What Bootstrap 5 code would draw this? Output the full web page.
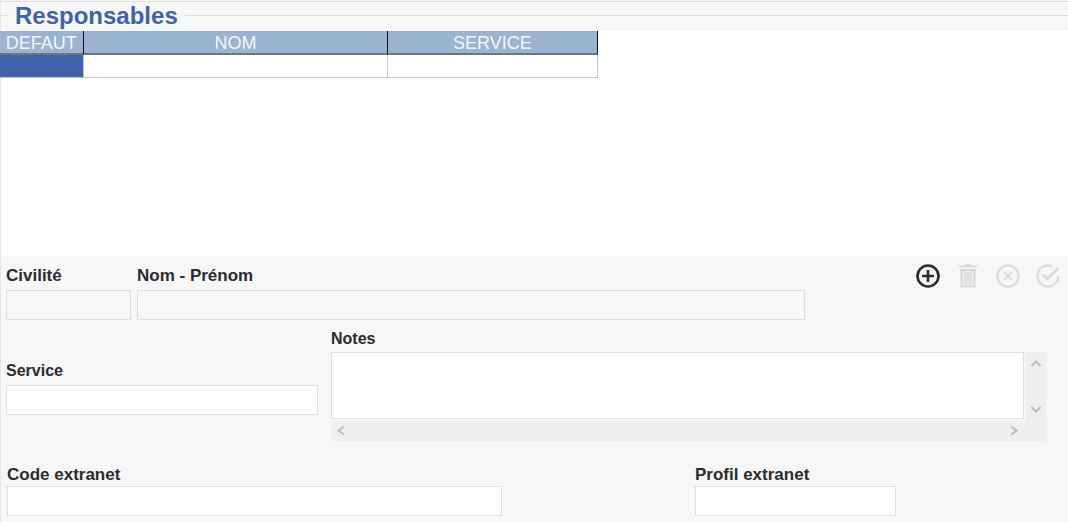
<!DOCTYPE html>
<html lang="fr">
<head>
<meta charset="utf-8">
<meta name="viewport" content="width=device-width, initial-scale=1">
<title>Responsables</title>
<link rel="stylesheet" href="https://cdn.jsdelivr.net/npm/bootstrap@5.3.0/dist/css/bootstrap.min.css">
<style>
  body { background: #f7f7f7; color: #2b2b30; font-family: "Liberation Sans", Arial, sans-serif; font-size: 17px; }
  .panel { border-left: 1px solid #e6e6e6; min-height: 100vh; }
  .panel-head { height: 31px; padding-top: 1px; }
  .rule { height: 1px; background: #dedede; }
  .title { color: #3f63a8; font-size: 24px; line-height: 28px; padding: 0 7px 0 6px; }
  .title-row { height: 27px; }

  .list-area { background: #fff; height: 225px; }
  .people { width: 56%; table-layout: fixed; border-collapse: separate; border-spacing: 0; margin-left: -1px; }
  .people th { height: 24px; padding: 3px 0 0; background: #99b3d1; color: #f4f7fa; font-size: 18px; font-weight: 400; line-height: 19px; text-align: center; border-right: 1px solid #111; border-bottom: 2px solid #6d7680; }
  .people td { height: 23px; padding: 0; background: #fff; border-right: 1px solid #c6c6c6; border-bottom: 1px solid #c6c6c6; }
  .people td.picked { background: #3f63a8; }
  .c-default { width: 14%; }
  .c-name { width: 51%; }

  .line { display: grid; }
  .line-id { grid-template-columns: 125fr 668fr 251fr; column-gap: 6px; padding: 8px 6px 0 5px; }
  .line-notes { grid-template-columns: 312fr 715fr; column-gap: 13px; padding: 7px 22px 0 5px; }
  .line-extranet { grid-template-columns: 495fr 193fr 201fr 167fr; padding: 22px 5px 6px 6px; }
  .service { padding-top: 32px; }
  .form-label { display: block; margin: 0 0 3px; padding-top: 1px; line-height: 22px; font-weight: 700; }
  .line-notes .form-label { font-size: 16px; }
  .line-notes .notes-label { margin-bottom: 2px; }
  .line-extranet .form-label { margin-bottom: 0; }
  .form-control, .form-control:disabled { height: 30px; padding: 2px 6px; border: 1px solid #dedede; border-radius: 0; background: #fff; font-size: 16px; }
  .form-control:disabled { background: #f7f7f7; }

  .tools { padding-right: 2px; }
  .tool { width: 24px; height: 24px; padding: 0; border: 0; background: none; color: #2b2b30; line-height: 0; }
  .tool:disabled { color: #dadada; }
  .tool svg { width: 24px; height: 24px; fill: none; stroke: currentColor; stroke-width: 2; }

  .notes-box { display: grid; grid-template: 67px 20px / 1fr 20px; row-gap: 2px; }
  .notes-box textarea.form-control { height: 67px; min-height: 0; resize: none; overflow: hidden; }
  .bar-y, .bar-x { background: #efefef; }
  .bar-y { grid-row: 1 / 3; grid-column: 2; padding: 2px 0 22px; }
  .with-bar { padding-right: 2px; }
  .bar-x { padding-right: 2px; }
  .arrow { width: 20px; height: 20px; padding: 0; border: 0; background: none; color: #bdbdbd; line-height: 0; }
  .arrow svg { width: 12px; height: 12px; fill: none; stroke: currentColor; stroke-width: 2; }
</style>
</head>
<body>
<main class="panel">
  <header class="panel-head">
    <div class="rule"></div>
    <div class="title-row d-flex align-items-center">
      <div class="rule" style="width: 8px"></div>
      <h1 class="title fw-bold m-0">Responsables</h1>
      <div class="rule flex-grow-1"></div>
    </div>
  </header>

  <section class="list-area">
    <table class="people">
      <colgroup><col class="c-default"><col class="c-name"><col></colgroup>
      <thead><tr><th scope="col">DEFAUT</th><th scope="col">NOM</th><th scope="col">SERVICE</th></tr></thead>
      <tbody><tr><td class="picked"></td><td></td><td></td></tr></tbody>
    </table>
  </section>

  <form>
    <div class="line line-id">
      <div>
        <label class="form-label" for="civilite">Civilité</label>
        <input class="form-control" id="civilite" type="text" disabled>
      </div>
      <div>
        <label class="form-label" for="nom">Nom - Prénom</label>
        <input class="form-control" id="nom" type="text" disabled>
      </div>
      <div class="tools d-flex justify-content-end align-items-start gap-3">
        <button class="tool" type="button" aria-label="Ajouter"><svg viewBox="0 0 24 24"><circle cx="12" cy="12" r="10.5" stroke-width="2.6"/><path d="M12 6v12M6 12h12" stroke-width="2.6"/></svg></button>
        <button class="tool" type="button" aria-label="Supprimer" disabled><svg viewBox="0 0 24 24"><path d="M3 2.500h18M9 1h6"/><path d="M5.500 6v16.500h13V6z" fill="#e9e9e9"/><path d="M9.500 8v12M12 8v12M14.500 8v12" stroke-width="1.200"/></svg></button>
        <button class="tool" type="button" aria-label="Annuler" disabled><svg viewBox="0 0 24 24"><circle cx="12" cy="12" r="10.500"/><path d="M8 8l8 8M16 8l-8 8"/></svg></button>
        <button class="tool" type="button" aria-label="Valider" disabled><svg viewBox="0 0 24 24"><path d="M16.500 2.500A10.500 10.500 0 1 0 22.500 12"/><path d="M7 10.500l4.500 4.500L22.500 4" stroke-width="2.500"/></svg></button>
      </div>
    </div>

    <div class="line line-notes">
      <div class="service">
        <label class="form-label" for="service">Service</label>
        <input class="form-control" id="service" type="text">
      </div>
      <div>
        <label class="form-label notes-label" for="notes">Notes</label>
        <div class="notes-box">
          <div class="with-bar"><textarea class="form-control" id="notes"></textarea></div>
          <div class="bar-y d-flex flex-column justify-content-between">
            <button class="arrow" type="button" aria-label="Défiler vers le haut"><svg viewBox="0 0 12 12"><path d="M1.500 8L6 3.500 10.500 8"/></svg></button>
            <button class="arrow" type="button" aria-label="Défiler vers le bas"><svg viewBox="0 0 12 12"><path d="M1.500 4L6 8.500 10.500 4"/></svg></button>
          </div>
          <div class="bar-x d-flex justify-content-between">
            <button class="arrow" type="button" aria-label="Défiler vers la gauche"><svg viewBox="0 0 12 12"><path d="M9 1.500L3.500 5.500 9 9.500"/></svg></button>
            <button class="arrow" type="button" aria-label="Défiler vers la droite"><svg viewBox="0 0 12 12"><path d="M3 1.500l5.500 4L3 9.500"/></svg></button>
          </div>
        </div>
      </div>
    </div>

    <div class="line line-extranet">
      <div>
        <label class="form-label" for="code">Code extranet</label>
        <input class="form-control" id="code" type="text">
      </div>
      <div></div>
      <div>
        <label class="form-label" for="profil">Profil extranet</label>
        <input class="form-control" id="profil" type="text">
      </div>
    </div>
  </form>
</main>
<script src="https://cdn.jsdelivr.net/npm/bootstrap@5.3.0/dist/js/bootstrap.bundle.min.js"></script>
</body>
</html>
